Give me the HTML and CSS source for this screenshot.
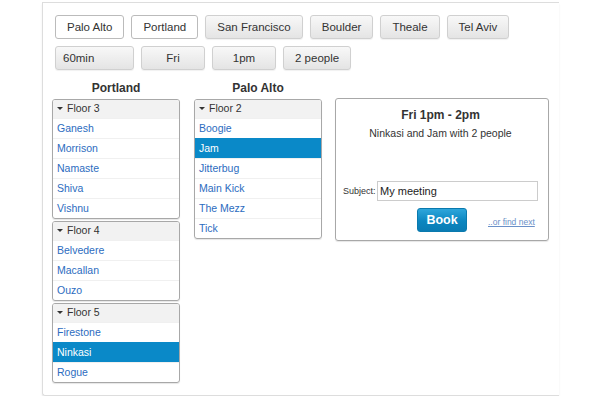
FILE: index.html
```html
<!DOCTYPE html>
<html>
<head>
<meta charset="utf-8">
<link rel="stylesheet" href="styles.css">
</head>
<body>
<div class="frame">
  <div class="btn-row">
    <button class="btn on">Palo Alto</button>
    <button class="btn on">Portland</button>
    <button class="btn">San Francisco</button>
    <button class="btn">Boulder</button>
    <button class="btn">Theale</button>
    <button class="btn">Tel Aviv</button>
  </div>
  <div class="btn-row row2">
    <button class="btn dur">60min</button>
    <button class="btn w64">Fri</button>
    <button class="btn w64">1pm</button>
    <button class="btn">2 people</button>
  </div>
  <div class="cols">
    <div class="col">
      <div class="col-title">Portland</div>
      <div class="floor">
        <div class="floor-head"><span class="caret"></span>Floor 3</div>
        <div class="room">Ganesh</div>
        <div class="room">Morrison</div>
        <div class="room">Namaste</div>
        <div class="room">Shiva</div>
        <div class="room">Vishnu</div>
      </div>
      <div class="floor">
        <div class="floor-head"><span class="caret"></span>Floor 4</div>
        <div class="room">Belvedere</div>
        <div class="room">Macallan</div>
        <div class="room">Ouzo</div>
      </div>
      <div class="floor">
        <div class="floor-head"><span class="caret"></span>Floor 5</div>
        <div class="room">Firestone</div>
        <div class="room sel">Ninkasi</div>
        <div class="room">Rogue</div>
      </div>
    </div>
    <div class="col">
      <div class="col-title">Palo Alto</div>
      <div class="floor">
        <div class="floor-head"><span class="caret"></span>Floor 2</div>
        <div class="room">Boogie</div>
        <div class="room sel">Jam</div>
        <div class="room">Jitterbug</div>
        <div class="room">Main Kick</div>
        <div class="room">The Mezz</div>
        <div class="room">Tick</div>
      </div>
    </div>
    <div class="card">
      <div class="card-title">Fri 1pm - 2pm</div>
      <div class="card-sub">Ninkasi and Jam with 2 people</div>
      <div class="subject">
        <label class="subj-label">Subject:</label>
        <div class="input">My meeting</div>
      </div>
      <div class="actions">
        <button class="book">Book</button>
        <a class="next" href="#">..or find next</a>
      </div>
    </div>
  </div>
</div>
</body>
</html>
```
FILE: styles.css
```css
* { box-sizing: border-box; }
body {
  margin: 0;
  background: #fff;
  font-family: "Liberation Sans", Arial, sans-serif;
  color: #333;
}
.frame {
  margin: 2px 0 0 42px;
  width: 517px;
  height: 394px;
  border: 1px solid #ddd;
  border-right: none;
  border-radius: 0 0 0 3px;
  box-shadow: 0 2px 2px rgba(0,0,0,0.08);
  padding: 12px 0 0 12px;
}
.btn-row {
  display: flex;
  gap: 7px;
}
.row2 { margin-top: 7px; }
.btn {
  height: 24px;
  padding: 0 11px;
  font-family: "Liberation Sans", Arial, sans-serif;
  font-size: 11.5px;
  color: #333;
  border: 1px solid #d0d0d0;
  border-radius: 3px;
  background: linear-gradient(#f8f8f8, #e4e4e4);
  box-shadow: 0 1px 1px rgba(0,0,0,0.06);
}
.btn.on {
  background: #fff;
  border-color: #bbb;
  box-shadow: none;
}
.btn.dur { width: 79px; text-align: left; padding-left: 7px; }
.btn.w64 { width: 64px; }
.cols {
  display: flex;
  align-items: flex-start;
  margin: 12px 0 0 -3px;
}
.col { width: 128px; margin-right: 14px; }
.col-title {
  font-weight: bold;
  font-size: 12px;
  text-align: center;
  height: 17px;
  line-height: 13px;
}
.floor {
  border: 1px solid #a8a8a8;
  border-radius: 3px;
  box-shadow: 0 1px 1px rgba(0,0,0,0.1);
  margin-bottom: 2px;
  overflow: hidden;
}
.floor-head {
  height: 18px;
  line-height: 17px;
  background: #f2f2f2;
  font-size: 10.5px;
  padding-left: 4px;
  color: #333;
}
.caret {
  display: inline-block;
  width: 0;
  height: 0;
  border-left: 3px solid transparent;
  border-right: 3px solid transparent;
  border-top: 3px solid #333;
  vertical-align: middle;
  margin: -2px 4px 0 0;
}
.room {
  height: 20px;
  line-height: 19px;
  border-top: 1px solid #f0f0f0;
  font-size: 10.5px;
  padding-left: 4px;
  color: #2c6cc0;
}
.room.sel {
  background: #0a89c8;
  color: #fff;
  border-top-color: #0a89c8;
}
.card {
  width: 214px;
  height: 143px;
  margin-left: -1px;
  margin-top: 16px;
  border: 1px solid #a8a8a8;
  border-radius: 3px;
  box-shadow: 0 1px 1px rgba(0,0,0,0.1);
  padding: 8px 10px 0 7px;
}
.card-title {
  text-align: center;
  font-weight: bold;
  font-size: 12px;
  line-height: 16px;
}
.card-sub {
  text-align: center;
  font-size: 10.5px;
  margin-top: 3px;
  line-height: 14px;
}
.subject {
  display: flex;
  align-items: center;
  margin-top: 41px;
}
.subj-label { font-size: 9px; width: 34px; }
.input {
  width: 161px;
  height: 20px;
  border: 1px solid #ccc;
  font-size: 11px;
  line-height: 18px;
  padding-left: 2px;
  color: #222;
}
.actions {
  display: flex;
  align-items: center;
  margin-top: 7px;
  padding-left: 74px;
}
.book {
  width: 50px;
  height: 24px;
  border: 1px solid #0a7aae;
  border-radius: 3px;
  background: linear-gradient(#2ea6db, #0c86c0 55%, #0a7cb4);
  color: #fff;
  font-family: "Liberation Sans", Arial, sans-serif;
  font-weight: bold;
  font-size: 12.5px;
  padding: 0;
}
.next {
  margin-left: 21px;
  margin-top: 3px;
  font-size: 8.5px;
  color: #6a90c8;
  text-decoration: underline;
}
```
